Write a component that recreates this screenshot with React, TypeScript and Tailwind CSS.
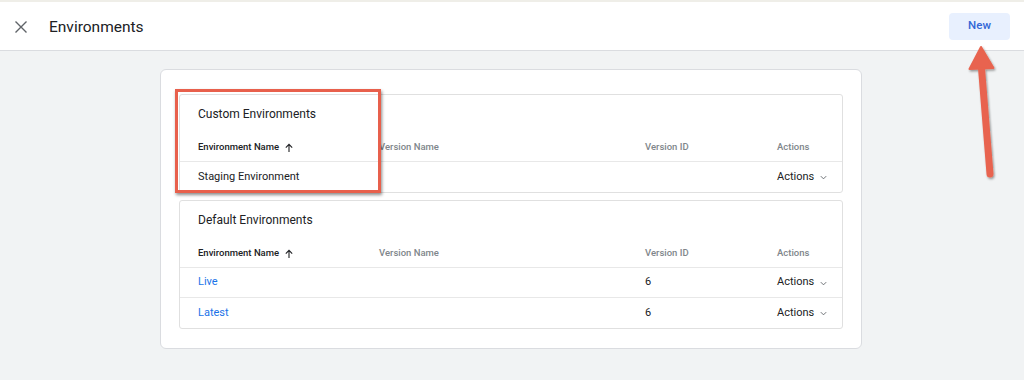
import React from "react";

type Row = { name: string; versionId?: string; link?: boolean };

const columns = "grid grid-cols-[181px_266px_132px_1fr] items-center pl-[18px]";

function ChevronDown() {
  return (
    <svg width="9" height="9" viewBox="0 0 10 10" className="ml-[5px] mt-[1px]">
      <path d="M2 3.5 L5 6.5 L8 3.5" fill="none" stroke="#5f6368" strokeWidth="1" />
    </svg>
  );
}

function Section({ title, rows }: { title: string; rows: Row[] }) {
  return (
    <div className="rounded-[3px] border border-[#e0e0e0] bg-white">
      <div className="h-[39px] pl-[18px] pt-[10px] text-[12px] text-[#202124]">{title}</div>
      <div className={`${columns} h-[28px] border-b border-[#e8e8e8] text-[9.5px] font-medium text-[#80868b]`}>
        <div className="flex items-center text-[#202124]">
          Environment Name
          <svg width="10" height="10" viewBox="0 0 10 10" className="ml-[5px]">
            <path d="M5 9 V1.5 M1.8 4.6 L5 1.4 L8.2 4.6" fill="none" stroke="#202124" strokeWidth="1.1" />
          </svg>
        </div>
        <div>Version Name</div>
        <div>Version ID</div>
        <div>Actions</div>
      </div>
      {rows.map((r, i) => (
        <div
          key={r.name}
          className={`${columns} h-[30px] text-[11px] ${i < rows.length - 1 ? "border-b border-[#e8e8e8]" : ""}`}
        >
          <div className={r.link ? "text-[#1a73e8]" : "text-[#202124]"}>{r.name}</div>
          <div />
          <div className="text-[#202124]">{r.versionId}</div>
          <div className="flex items-center text-[#202124]">
            Actions
            <ChevronDown />
          </div>
        </div>
      ))}
    </div>
  );
}

export default function App() {
  return (
    <div className="relative h-[380px] w-[1024px] overflow-hidden bg-[#f1f3f4] font-['Roboto',sans-serif]">
      <div className="h-[2px] bg-[#efeee8]" />
      {/* Header bar */}
      <div className="flex h-[49px] items-center border-b border-[#dadce0] bg-white pl-[14px] pr-[14px]">
        <svg width="14" height="14" viewBox="0 0 14 14" className="mt-[2px]">
          <path d="M1.5 1.5 L12.5 12.5 M12.5 1.5 L1.5 12.5" stroke="#5f6368" strokeWidth="1.4" />
        </svg>
        <div className="ml-[21px] mt-[4px] text-[15.5px] text-[#202124]">Environments</div>
        <button className="ml-auto h-[27px] w-[61px] rounded-[4px] bg-[#e8f0fe] text-[11.5px] font-medium text-[#3367d6]">
          New
        </button>
      </div>

      {/* Main card */}
      <div className="ml-[160px] mt-[18px] w-[702px] rounded-[6px] border border-[#dadce0] bg-white px-[18px] pb-[19px] pt-[24px]">
        <div className="flex flex-col gap-[7px]">
          <Section title="Custom Environments" rows={[{ name: "Staging Environment" }]} />
          <Section
            title="Default Environments"
            rows={[
              { name: "Live", versionId: "6", link: true },
              { name: "Latest", versionId: "6", link: true },
            ]}
          />
        </div>
      </div>

      {/* Annotation: highlight box */}
      <div className="absolute left-[175px] top-[89px] h-[104px] w-[206px] border-[3px] border-[#e8604c] shadow-[1px_2px_3px_rgba(0,0,0,0.45)]" />

      {/* Annotation: arrow */}
      <svg className="absolute left-[960px] top-[40px]" width="50" height="145" viewBox="0 0 50 145">
        <defs>
          <filter id="sh" x="-50%" y="-10%" width="200%" height="130%">
            <feDropShadow dx="1" dy="1.5" stdDeviation="1.2" floodColor="#000" floodOpacity="0.4" />
          </filter>
        </defs>
        <g filter="url(#sh)">
          <path d="M21 22 L30 134" stroke="#e8644f" strokeWidth="7" strokeLinecap="round" />
          <path d="M21 7 L33.5 28 L9.5 29 Z" fill="#e8644f" stroke="#e8644f" strokeWidth="2" strokeLinejoin="round" />
        </g>
      </svg>
    </div>
  );
}
